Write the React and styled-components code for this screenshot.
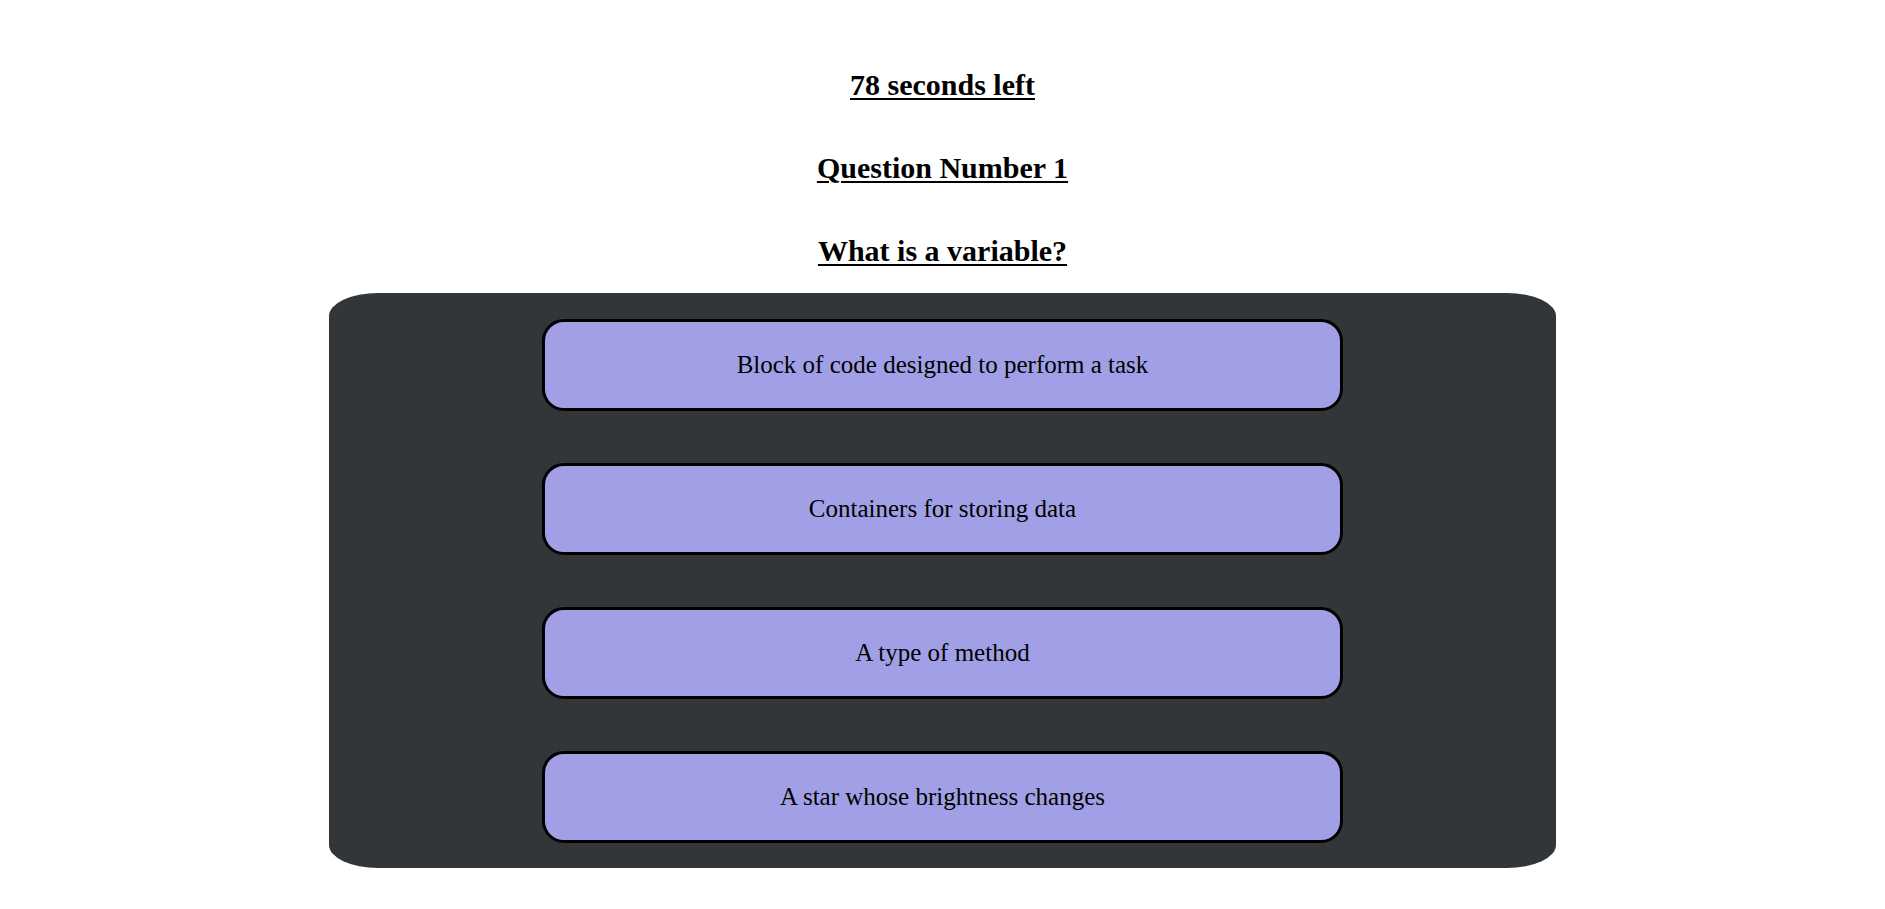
import React from "react";
import styled, { createGlobalStyle } from "styled-components";

const Global = createGlobalStyle`
  html, body { margin: 0; padding: 0; background: #ffffff; }
  body { font-family: "Liberation Serif", "Times New Roman", serif; color: #000; }
`;

const Page = styled.main`
  display: flex;
  flex-direction: column;
  align-items: center;
  padding-top: 68px;
`;

const Headings = styled.header`
  display: flex;
  flex-direction: column;
  align-items: center;
  gap: 49px;
`;

const Heading = styled.h2`
  margin: 0;
  font-size: 30px;
  line-height: 34px;
  font-weight: 700;
  text-decoration: underline;
  text-decoration-thickness: 2px;
  text-underline-offset: 3px;
`;

const Panel = styled.section`
  margin-top: 25px;
  width: 1227px;
  box-sizing: border-box;
  background: #323639;
  border-radius: 4%;
  padding: 26px 0 25px;
  display: flex;
  flex-direction: column;
  align-items: center;
  gap: 52px;
`;

const Option = styled.button`
  width: 801px;
  height: 92px;
  box-sizing: border-box;
  background: #a1a0e6;
  border: 3px solid #000;
  border-radius: 22px;
  font-family: "Liberation Serif", "Times New Roman", serif;
  font-size: 25px;
  color: #000;
  display: flex;
  align-items: center;
  justify-content: center;
  cursor: pointer;
  padding: 0;
`;

const options = [
  "Block of code designed to perform a task",
  "Containers for storing data",
  "A type of method",
  "A star whose brightness changes",
];

export default function App() {
  return (
    <>
      <Global />
      <Page>
        <Headings>
          <Heading>78 seconds left</Heading>
          <Heading>Question Number 1</Heading>
          <Heading>What is a variable?</Heading>
        </Headings>
        <Panel>
          {options.map((o) => (
            <Option key={o}>{o}</Option>
          ))}
        </Panel>
      </Page>
    </>
  );
}
